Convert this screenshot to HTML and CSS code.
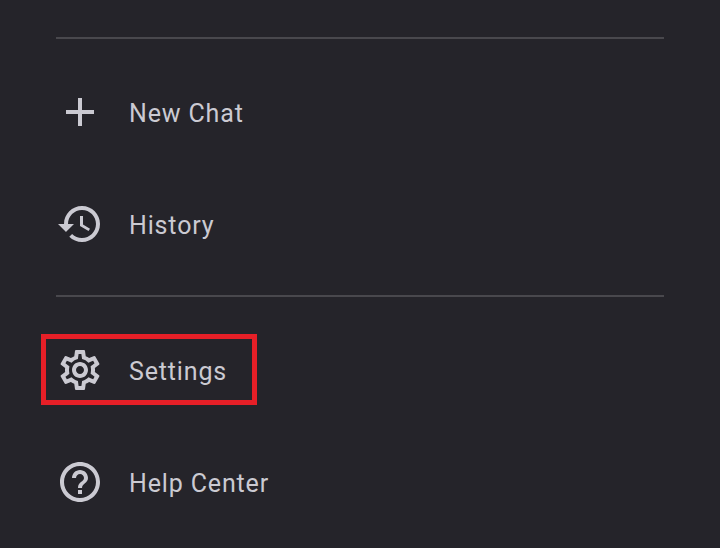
FILE: index.html
```html
<!DOCTYPE html>
<html lang="en">
<head>
<meta charset="utf-8">
<title>Menu</title>
<link rel="stylesheet" href="styles.css">
</head>
<body>
<nav class="menu">
  <ul class="group">
    <li class="row">
      <svg class="icon" viewBox="0 0 24 24"><path d="M19 13h-6v6h-2v-6H5v-2h6V5h2v6h6v2z"/></svg>
      <span class="label">New Chat</span>
    </li>
    <li class="row">
      <svg class="icon" viewBox="0 0 24 24"><path d="M13 3c-4.97 0-9 4.03-9 9H1l3.89 3.89.07.14L9 12H6c0-3.87 3.13-7 7-7s7 3.13 7 7-3.13 7-7 7c-1.93 0-3.68-.79-4.94-2.06l-1.42 1.42C8.27 19.99 10.51 21 13 21c4.97 0 9-4.03 9-9s-4.03-9-9-9zm-1 5v5l4.28 2.54.72-1.21-3.5-2.08V8H12z"/></svg>
      <span class="label">History</span>
    </li>
  </ul>
  <ul class="group">
    <li class="row">
      <svg class="icon" viewBox="0 0 24 24"><path d="M19.43 12.98c.04-.32.07-.64.07-.98 0-.34-.03-.66-.07-.98l2.11-1.65c.19-.15.24-.42.12-.64l-2-3.46c-.09-.16-.26-.25-.44-.25-.06 0-.12.01-.17.03l-2.49 1c-.52-.4-1.08-.73-1.69-.98l-.38-2.65C14.46 2.18 14.25 2 14 2h-4c-.25 0-.46.18-.49.42l-.38 2.65c-.61.25-1.17.59-1.69.98l-2.49-1c-.06-.02-.12-.03-.18-.03-.17 0-.34.09-.43.25l-2 3.46c-.13.22-.07.49.12.64l2.11 1.65c-.04.32-.07.65-.07.98 0 .33.03.66.07.98l-2.11 1.65c-.19.15-.24.42-.12.64l2 3.46c.09.16.26.25.44.25.06 0 .12-.01.17-.03l2.49-1c.52.4 1.08.73 1.69.98l.38 2.65c.03.24.24.42.49.42h4c.25 0 .46-.18.49-.42l.38-2.65c.61-.25 1.17-.59 1.69-.98l2.49 1c.06.02.12.03.18.03.17 0 .34-.09.43-.25l2-3.46c.12-.22.07-.49-.12-.64l-2.11-1.65zm-1.98-1.71c.04.31.05.52.05.73 0 .21-.02.43-.05.73l-.14 1.13.89.7 1.08.84-.7 1.21-1.27-.51-1.04-.42-.9.68c-.43.32-.84.56-1.25.73l-1.06.43-.16 1.13-.2 1.35h-1.4l-.19-1.35-.16-1.13-1.06-.43c-.43-.18-.83-.41-1.23-.71l-.91-.7-1.06.43-1.27.51-.7-1.21 1.08-.84.89-.7-.14-1.13c-.03-.31-.05-.54-.05-.74s.02-.43.05-.73l.14-1.13-.89-.7-1.08-.84.7-1.21 1.27.51 1.04.42.9-.68c.43-.32.84-.56 1.25-.73l1.06-.43.16-1.13.2-1.35h1.39l.19 1.35.16 1.13 1.06.43c.43.18.83.41 1.23.71l.91.7 1.06-.43 1.27-.51.7 1.21-1.07.85-.89.7.14 1.13zM12 8c-2.21 0-4 1.79-4 4s1.79 4 4 4 4-1.79 4-4-1.79-4-4-4zm0 6c-1.1 0-2-.9-2-2s.9-2 2-2 2 .9 2 2-.9 2-2 2z"/></svg>
      <span class="label">Settings</span>
      <span class="highlight"></span>
    </li>
    <li class="row">
      <svg class="icon" viewBox="0 0 24 24"><path d="M11 18h2v-2h-2v2zm1-16C6.48 2 2 6.48 2 12s4.48 10 10 10 10-4.48 10-10S17.52 2 12 2zm0 18c-4.41 0-8-3.59-8-8s3.59-8 8-8 8 3.59 8 8-3.59 8-8 8zm0-14c-2.21 0-4 1.79-4 4h2c0-1.1.9-2 2-2s2 .9 2 2c0 2-3 1.75-3 5h2c0-2.25 3-2.5 3-5 0-2.21-1.79-4-4-4z"/></svg>
      <span class="label">Help Center</span>
    </li>
  </ul>
</nav>
</body>
</html>
```

FILE: styles.css
```css
html, body {
  margin: 0;
  height: 100%;
  background: #25242a;
}

body {
  overflow: hidden;
}

.menu {
  padding: 37px 56px 0;
  font-family: Roboto, "Liberation Sans", sans-serif;
}

.group {
  list-style: none;
  margin: 0;
  padding: 17px 0 15px;
  border-top: 2px solid #49484d;
}

.row {
  position: relative;
  display: flex;
  align-items: center;
  gap: 25px;
  height: 112px;
}

.icon {
  width: 48px;
  height: 48px;
  flex: none;
  fill: #cbcad2;
}

.label {
  padding-top: 2px;
  font-size: 25px;
  letter-spacing: 0.85px;
  color: #cbcad2;
}

.highlight {
  position: absolute;
  left: -15px;
  top: 20px;
  width: 216px;
  height: 71px;
  box-sizing: border-box;
  border: 5px solid #e61f27;
}
```
